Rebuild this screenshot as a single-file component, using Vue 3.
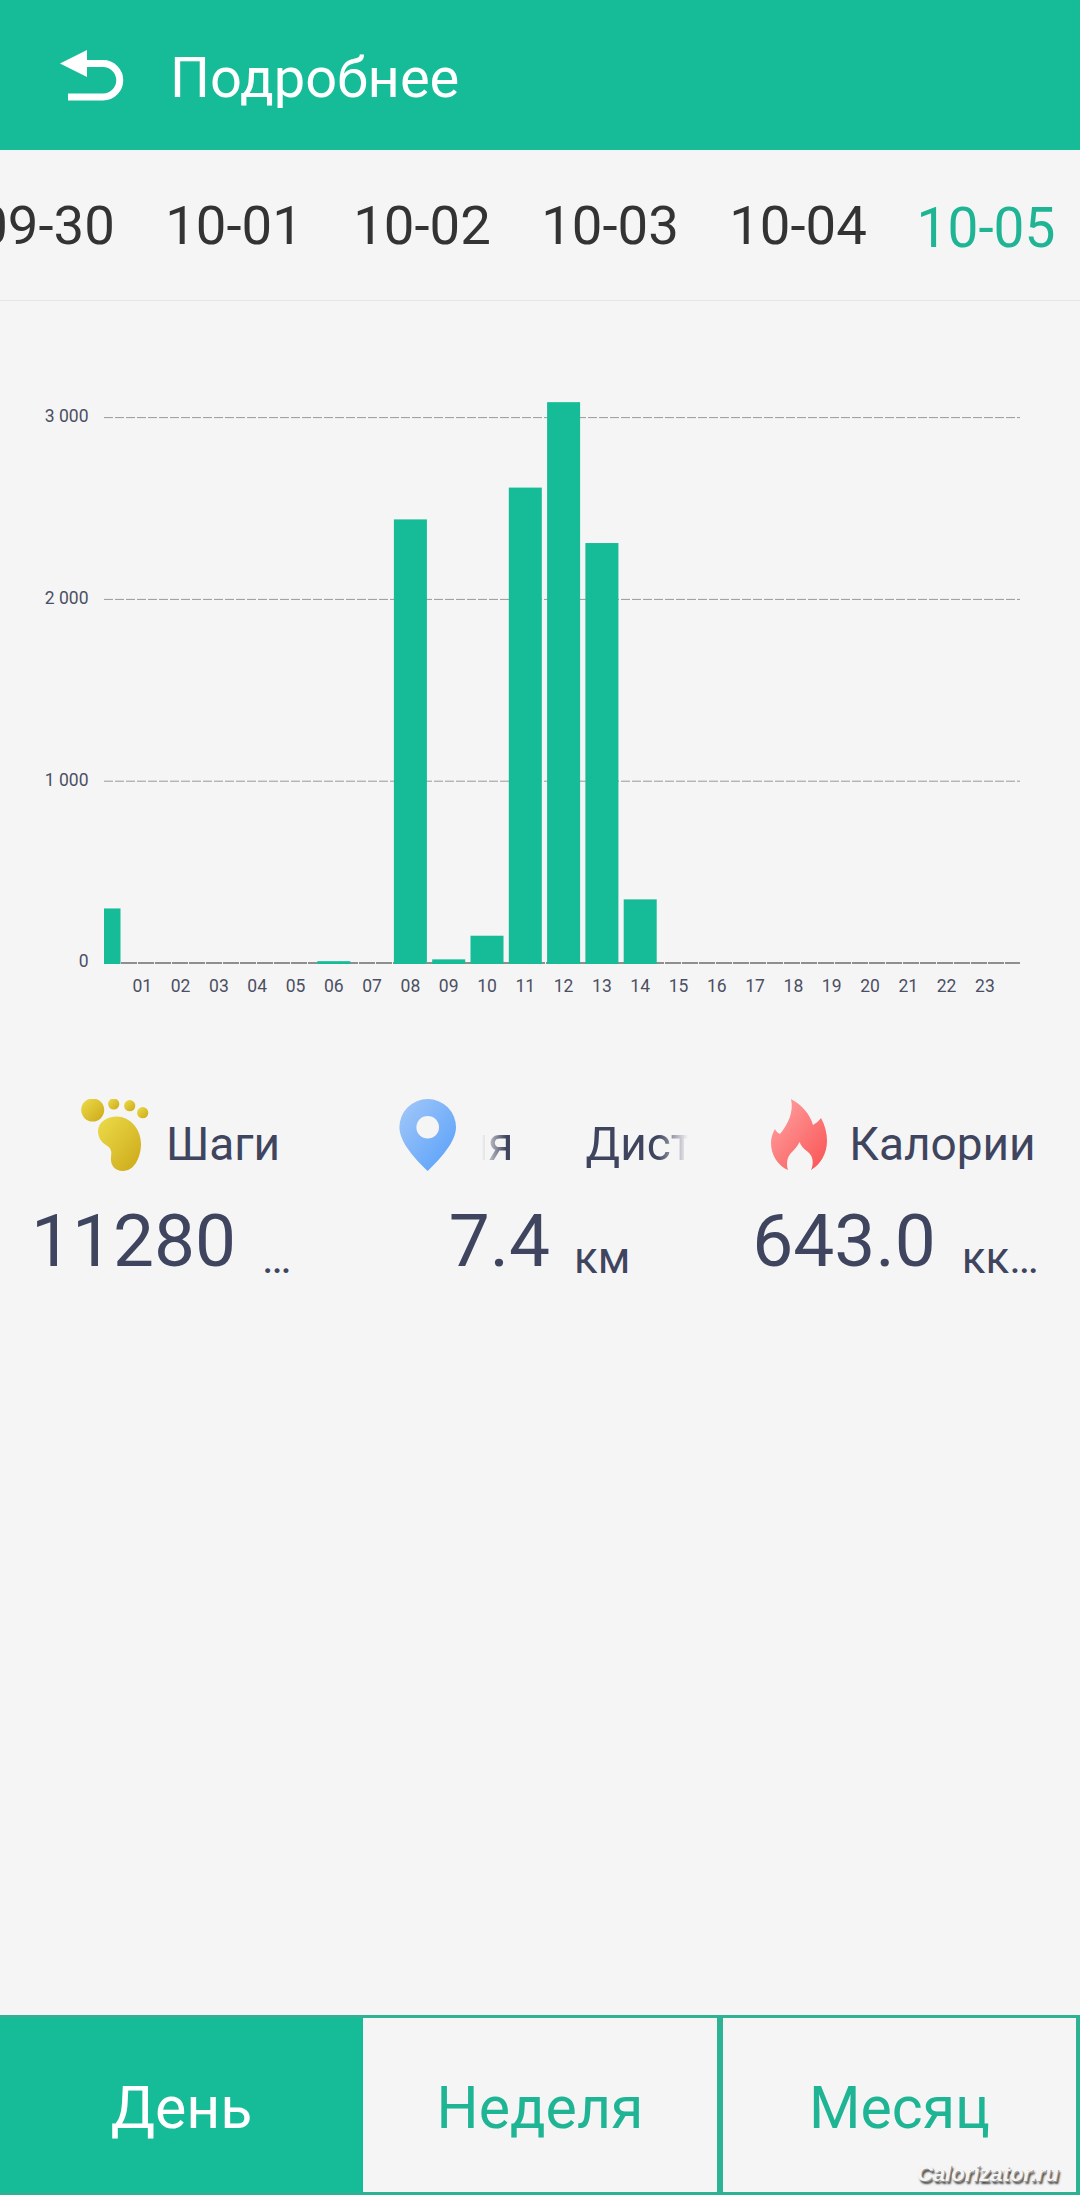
<script setup>
import { ref, computed } from 'vue'

const dates = ['09-30', '10-01', '10-02', '10-03', '10-04', '10-05']
const periods = ['День', 'Неделя', 'Месяц']
const activeDate = ref('10-05')
const activePeriod = ref('День')

// steps per hour
const hourly = {
  0: 300, 6: 10, 8: 2440, 9: 20, 10: 150, 11: 2615, 12: 3085, 13: 2310, 14: 350,
}

const plotLeft = 104
const plotRight = 1020
const baseline = 662
const unitPx = 0.1818
const step = 38.3
const barWidth = 33

const gridLines = [1000, 2000, 3000].map((v) => ({
  y: baseline - v * unitPx,
  label: String(v).replace('000', ' 000'),
}))

const bars = computed(() =>
  Object.entries(hourly).map(([hour, value]) => {
    const center = plotLeft + hour * step
    const x = Math.max(center - barWidth / 2, plotLeft)
    const height = value * unitPx
    return {
      hour,
      x,
      y: baseline - height,
      width: center + barWidth / 2 - x,
      height,
    }
  }),
)

const hours = Array.from({ length: 23 }, (_, i) => ({
  x: plotLeft + (i + 1) * step,
  label: String(i + 1).padStart(2, '0'),
}))
</script>

<template>
  <div class="page">
    <header class="topbar">
      <svg class="back" width="80" height="80" viewBox="0 0 80 80">
        <path d="M0 33.5 L27 20 V47 Z" fill="#fff" />
        <path d="M25 33.5 H43 A16.75 16.75 0 0 1 43 67 H8" fill="none" stroke="#fff" stroke-width="7" />
      </svg>
      <span class="title">Подробнее</span>
    </header>

    <nav class="dates">
      <span
        v-for="d in dates"
        :key="d"
        class="date"
        :class="{ active: d === activeDate }"
        @click="activeDate = d"
      >{{ d }}</span>
    </nav>

    <svg class="chart" width="1080" height="700" viewBox="0 0 1080 700">
      <g v-for="line in gridLines" :key="line.label">
        <line
          :x1="plotLeft"
          :x2="plotRight"
          :y1="line.y"
          :y2="line.y"
          stroke="#999"
          stroke-width="1"
          stroke-dasharray="9 2"
        />
        <text class="axis" x="88.5" :y="line.y + 4.5" text-anchor="end">{{ line.label }}</text>
      </g>
      <line
        :x1="plotLeft"
        :x2="plotRight"
        :y1="baseline"
        :y2="baseline"
        stroke="#8f8f8f"
        stroke-width="2"
        stroke-dasharray="16 1"
      />
      <text class="axis" x="88.5" :y="baseline + 4" text-anchor="end">0</text>
      <rect
        v-for="b in bars"
        :key="b.hour"
        :x="b.x"
        :y="b.y"
        :width="b.width"
        :height="b.height + 1"
        fill="#15bc97"
      />
      <text
        v-for="h in hours"
        :key="h.label"
        class="axis"
        :x="h.x"
        :y="baseline + 29"
        text-anchor="middle"
      >{{ h.label }}</text>
    </svg>

    <section class="stats">
      <div class="stat">
        <div class="stat-head stat-head-steps">
          <svg width="72" height="72" viewBox="5 5 72 72">
            <defs>
              <linearGradient id="footFill" x1="0" y1="0" x2="1" y2="1">
                <stop offset="0" stop-color="#ecdc4a" />
                <stop offset="1" stop-color="#cda818" />
              </linearGradient>
            </defs>
            <g fill="url(#footFill)">
              <circle cx="17.7" cy="16" r="11.5" />
              <circle cx="38.7" cy="10" r="5.6" />
              <circle cx="54.7" cy="11.7" r="5.6" />
              <circle cx="67.7" cy="18.7" r="5.6" />
              <path d="M42 22.5 C54 22.5 66 34 66 50 C66 62 60 77 48 77 C39 77 35 70 36 63 C37 57 36 54 31 51 C26 48 23 43 23 37 C23 28 32 22.5 42 22.5 Z" />
            </g>
          </svg>
          <span class="label">Шаги</span>
        </div>
        <div class="stat-value">
          <span class="num">11280</span>
          <span class="unit unit-steps">…</span>
        </div>
      </div>

      <div class="stat">
        <div class="stat-head">
          <svg width="72" height="72" viewBox="2 5 72 72">
            <defs>
              <linearGradient id="pinFill" x1="0" y1="0" x2="1" y2="1">
                <stop offset="0" stop-color="#a4c8f8" />
                <stop offset="1" stop-color="#559ffa" />
              </linearGradient>
            </defs>
            <path
              fill="url(#pinFill)"
              d="M37.7 5 A28.3 28.3 0 0 1 66 33.3 C66 48 50 65 37.7 77 C25 65 9.4 48 9.4 33.3 A28.3 28.3 0 0 1 37.7 5 Z"
            />
            <circle cx="37.7" cy="33.3" r="11.3" fill="#f5f5f5" />
          </svg>
          <div class="marquee">
            <div class="marquee-track">
              <span class="label">Дистанция</span>
              <span class="label">Дистанция</span>
            </div>
          </div>
        </div>
        <div class="stat-value stat-value-dist">
          <span class="num">7.4</span>
          <span class="unit">км</span>
        </div>
      </div>

      <div class="stat">
        <div class="stat-head stat-head-cal">
          <svg width="72" height="72" viewBox="2 5 72 72">
            <defs>
              <linearGradient id="fireFill" x1="0" y1="0" x2="1" y2="1">
                <stop offset="0" stop-color="#ffa6a6" />
                <stop offset="1" stop-color="#fa5252" />
              </linearGradient>
            </defs>
            <path
              fill="url(#fireFill)"
              d="M30 5 C41 11 49 20 52 31 C55 29 58 27 60 24 C64 31 66 39 66 47 C66 60 59 71 50 76 C53 69 52 62 47 58 C43 55 40 52 38.5 48 C36 53 33 56 30 59 C26 63 25 70 27 76 C17 72 10 61 10 49 C10 44 11.5 39 14 35 C15 37 16.5 39 19 40 C27 30 33 18 30 5 Z"
            />
          </svg>
          <span class="label">Калории</span>
        </div>
        <div class="stat-value">
          <span class="num">643.0</span>
          <span class="unit unit-cal">ккал</span>
        </div>
      </div>
    </section>

    <footer class="periods">
      <button
        v-for="p in periods"
        :key="p"
        class="period"
        :class="{ active: p === activePeriod }"
        @click="activePeriod = p"
      >{{ p }}</button>
    </footer>

    <span class="watermark">Calorizator.ru</span>
  </div>
</template>

<style>
body {
  background: #f5f5f5;
}
</style>

<style scoped>
.page {
  position: relative;
  display: flex;
  flex-direction: column;
  width: 1080px;
  height: 2195px;
  overflow: hidden;
  background: #f5f5f5;
  font-family: Roboto, "Noto Sans", sans-serif;
}

.topbar {
  display: flex;
  align-items: center;
  flex: none;
  height: 150px;
  padding-left: 60px;
  background: #15bc97;
  color: #fff;
}

.back {
  flex: none;
  margin-top: -10px;
}

.title {
  margin-left: 30px;
  margin-top: 6px;
  font-size: 56px;
  line-height: 1;
}

.dates {
  display: flex;
  justify-content: flex-end;
  align-items: center;
  flex: none;
  height: 150px;
  border-bottom: 1px solid #e5e5e5;
  box-sizing: content-box;
  overflow: hidden;
}

.date {
  flex: none;
  width: 188px;
  text-align: center;
  font-size: 54.5px;
  color: #333;
  white-space: nowrap;
}

.date.active {
  font-size: 55px;
  color: #1fb594;
  padding-top: 5px;
}

.chart {
  display: block;
  flex: none;
}

.axis {
  font-size: 17.5px;
  fill: #4c4f63;
}

.stats {
  display: flex;
  flex: none;
  margin-top: 98px;
  color: #40455f;
}

.stat {
  flex: 1 1 0;
  display: flex;
  flex-direction: column;
  align-items: center;
  min-width: 0;
}

.stat-head {
  display: flex;
  align-items: flex-end;
  gap: 18px;
  height: 72px;
}

.stat-head svg {
  flex: none;
}

.stat-head-steps {
  gap: 14px;
}

.stat-head-cal {
  gap: 14px;
  margin-left: -1px;
}

.label {
  font-size: 46px;
  line-height: 52px;
  padding-bottom: 1px;
  white-space: nowrap;
}

.marquee {
  width: 206px;
  overflow: hidden;
  -webkit-mask-image: linear-gradient(to right, transparent 0, #000 24px, #000 176px, transparent 206px);
  mask-image: linear-gradient(to right, transparent 0, #000 24px, #000 176px, transparent 206px);
}

.marquee-track {
  display: flex;
  gap: 72px;
  margin-left: -206px;
}

.stat-value {
  display: flex;
  align-items: baseline;
  gap: 26px;
  margin-top: 27px;
  height: 86px;
}

.stat-value-dist {
  gap: 24px;
  margin-left: -1px;
}

.num {
  font-size: 73px;
  line-height: 86px;
  white-space: nowrap;
}

.unit {
  position: relative;
  top: 7px;
  font-size: 44px;
  line-height: 52px;
  white-space: nowrap;
  overflow: hidden;
  text-overflow: ellipsis;
}

.unit-steps {
  width: 67px;
}

.unit-cal {
  width: 86px;
}

.periods {
  display: flex;
  flex: none;
  height: 180px;
  margin-top: auto;
  box-sizing: border-box;
  border-top: 3px solid #2db394;
  border-bottom: 3px solid #2db394;
  border-right: 4px solid #2db394;
}

.period {
  flex: none;
  width: 354px;
  padding: 5px 0 0;
  border: none;
  background: #f5f5f5;
  color: #1fb594;
  font-family: inherit;
  font-size: 59px;
}

.period.active {
  width: 363px;
  background: #15bc97;
  color: #fff;
}

.period:last-child {
  width: 353px;
  border-left: 6px solid #2db394;
  box-sizing: content-box;
}

.watermark {
  position: absolute;
  left: 917px;
  top: 2161px;
  font-family: "Liberation Sans", sans-serif;
  font-size: 22px;
  font-weight: bold;
  font-style: italic;
  color: #f4f4f4;
  text-shadow: 1px 1px 0 #999, 2px 3px 2px #444;
}
</style>
